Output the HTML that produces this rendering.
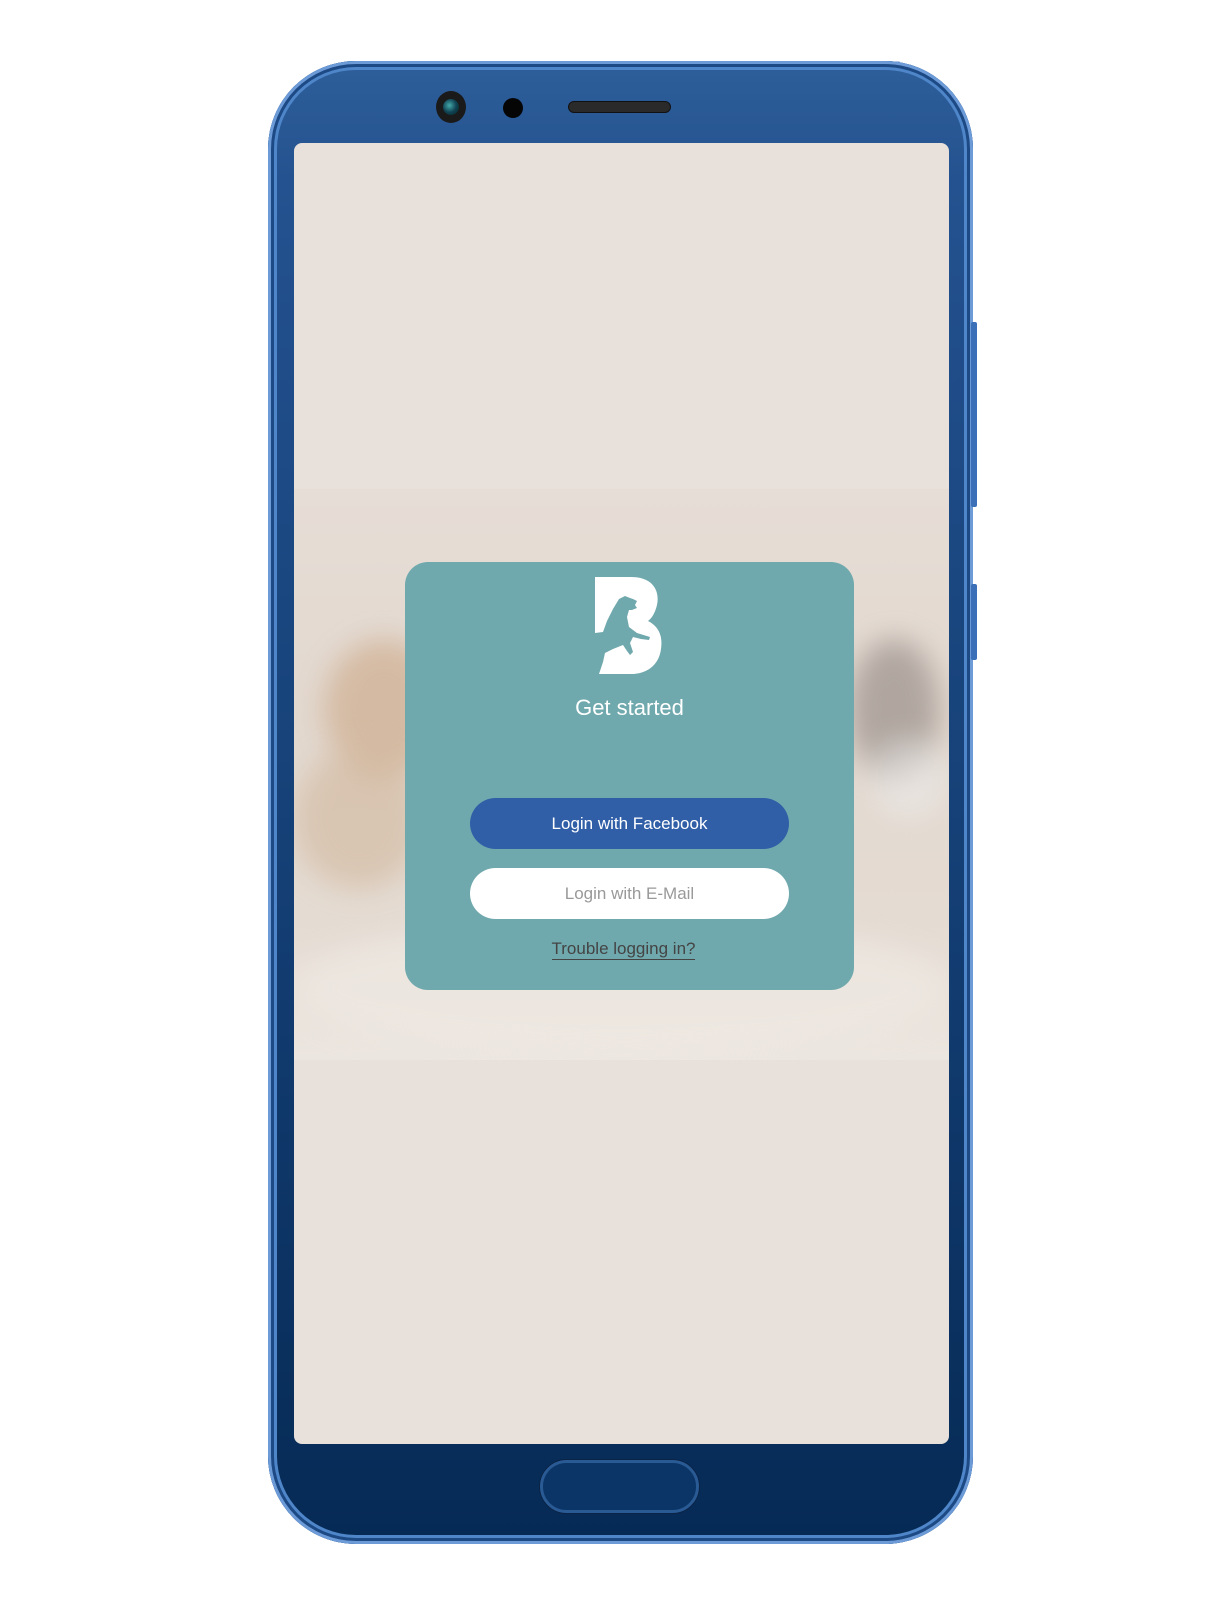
<!DOCTYPE html>
<html><head><meta charset="utf-8"><style>
*{margin:0;padding:0;box-sizing:border-box}
body{width:1229px;height:1600px;background:#fff;position:relative;overflow:hidden;font-family:"Liberation Sans",sans-serif}
.body{position:absolute;left:268px;top:61px;width:705px;height:1483px;border-radius:88px;background:linear-gradient(180deg,#2e5f9a 0%,#245290 8%,#143f75 55%,#062a55 100%);box-shadow:inset 0 0 0 3px #6c9bd8,inset 0 0 0 6px #1d4a85,inset 0 0 0 9px #4e86c9}
.btn{position:absolute;left:971px;width:6px;background:#3b70b8;border-radius:2px}
.screen{position:absolute;left:294px;top:143px;width:655px;height:1301px;background:#e8e0da;border-radius:8px;overflow:hidden}
.photo{position:absolute;left:0;top:346px;width:655px;height:571px;background:linear-gradient(180deg,#e6ddd6 0%,#e2d8cf 40%,#e4dbd2 75%,#ece6e0 100%);overflow:hidden}
.blob{position:absolute;border-radius:50%;filter:blur(14px)}
.card{position:absolute;left:405px;top:562px;width:449px;height:428px;background:#70a9ad;border-radius:23px}
.t{position:absolute;width:100%;text-align:center;color:#fff}
.pill{position:absolute;left:65px;width:319px;height:51px;border-radius:26px;text-align:center;line-height:51px;font-size:17px}
</style></head><body>
<div class="body"></div>
<div class="btn" style="top:322px;height:185px"></div>
<div class="btn" style="top:584px;height:76px"></div>
<div style="position:absolute;left:436px;top:91px;width:30px;height:32px;border-radius:50%;background:#1a1a1a"></div>
<div style="position:absolute;left:443px;top:99px;width:16px;height:16px;border-radius:50%;background:radial-gradient(circle at 40% 40%,#4aa 0,#145 50%,#022 100%)"></div>
<div style="position:absolute;left:503px;top:98px;width:20px;height:20px;border-radius:50%;background:#050505"></div>
<div style="position:absolute;left:568px;top:101px;width:103px;height:12px;border-radius:6px;background:#2a2a2a;border:1px solid #111"></div>
<div style="position:absolute;left:540px;top:1460px;width:159px;height:53px;border-radius:27px;border:3px solid #2a5a94;background:#0a3566;box-shadow:0 0 0 1px #0a2346"></div>
<div class="screen">
 <div class="photo">
  <div class="blob" style="left:30px;top:150px;width:120px;height:140px;background:#cfae90;opacity:.7"></div>
  <div class="blob" style="left:0;top:260px;width:130px;height:140px;background:#d2b89e;opacity:.6"></div>
  <div class="blob" style="left:555px;top:150px;width:90px;height:140px;background:#8f8580;opacity:.6"></div>
  <div class="blob" style="left:575px;top:250px;width:80px;height:80px;background:#eee;opacity:.5"></div>
  <div class="blob" style="left:0;top:430px;width:655px;height:140px;background:#efe9e3;opacity:.7"></div>
 </div>
</div>
<div class="card">
 <svg style="position:absolute;left:190px;top:15px" width="68" height="97" viewBox="0 0 68 97">
  <path d="M0 0 H36 C58 0 65 14 62 28 C60 36 57 41 53 44 C63 49 68 58 66 72 C64 88 52 97 36 97 H0 Z" fill="#fff"/>
  <path d="M0 56 L8 55 L12 44 L18 32 L24 22 L30 19 L35 21 L38 22 L42 24 L40 28 L42 31 L37 33 L34 33 L32 40 L34 50 L42 56 L55 60 L54 63 L46 62 L38 60 L35 66 L38 75 L35 78 L32 74 L28 68 L18 72 L10 76 L8 85 L4 97 L0 97 Z" fill="#70a9ad"/>
 </svg>
 <div class="t" style="top:133px;font-size:22px">Get started</div>
 <div class="pill" style="top:236px;background:#305fa7;color:#fff">Login with Facebook</div>
 <div class="pill" style="top:306px;background:#fff;color:#999">Login with E-Mail</div>
 <div class="t" style="top:377px;font-size:17px;color:#444;left:-6px"><span style="border-bottom:1.5px solid #444;padding-bottom:1px">Trouble logging in?</span></div>
</div>
</body></html>
